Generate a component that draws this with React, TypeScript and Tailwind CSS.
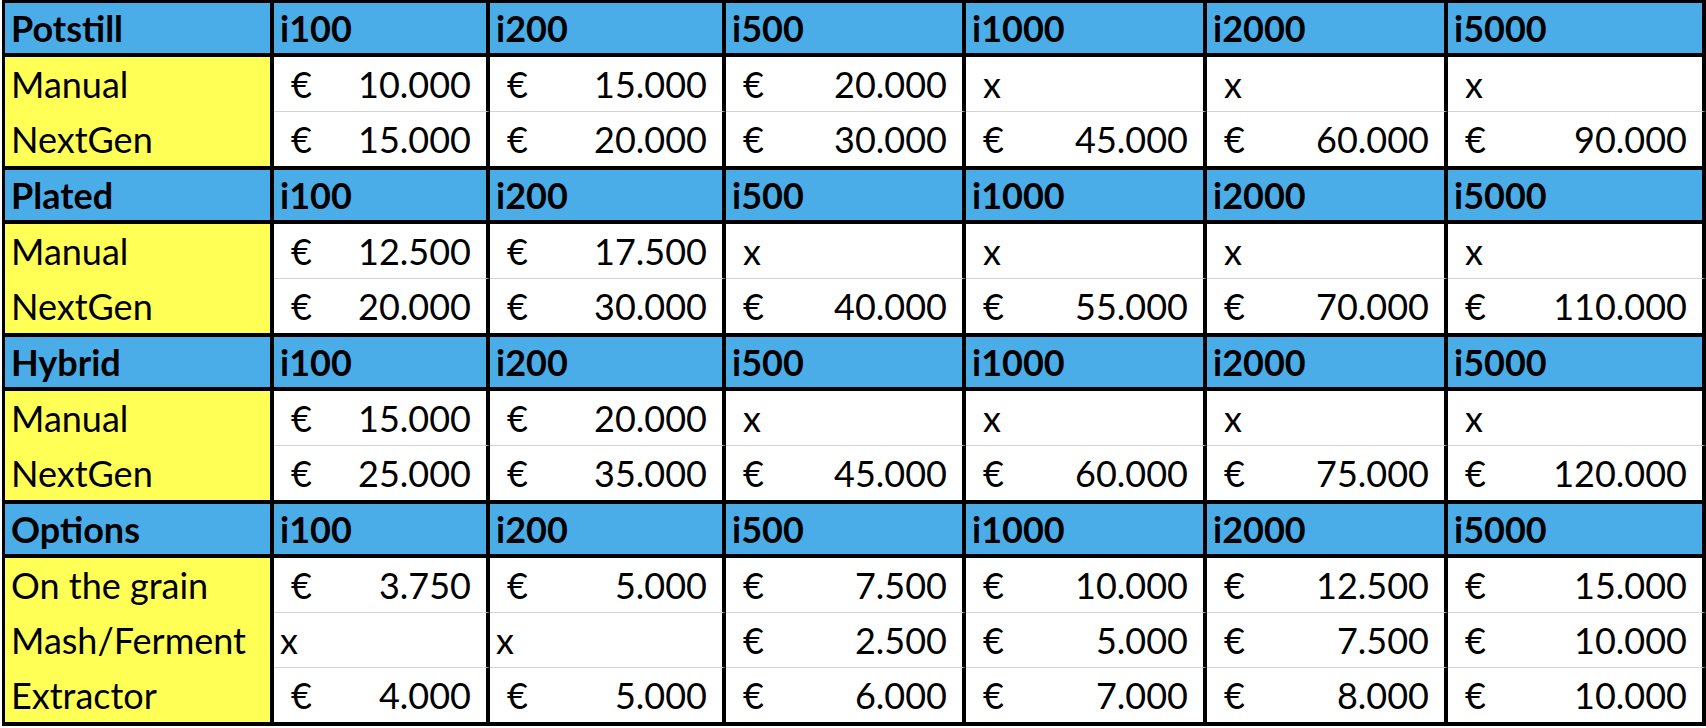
type Cell = string; // "x" = indented x, "xl" = plain x at the left, anything else = euro amount

type Section = {
  title: string;
  rows: { label: string; cells: Cell[] }[];
};

const sizes = ["i100", "i200", "i500", "i1000", "i2000", "i5000"];

// widths of the price columns, right border included (px)
const widths = ["w-[216px]", "w-[236px]", "w-[240px]", "w-[241px]", "w-[241px]", "w-[258px]"];

const sections: Section[] = [
  {
    title: "Potstill",
    rows: [
      { label: "Manual", cells: ["10.000", "15.000", "20.000", "x", "x", "x"] },
      { label: "NextGen", cells: ["15.000", "20.000", "30.000", "45.000", "60.000", "90.000"] },
    ],
  },
  {
    title: "Plated",
    rows: [
      { label: "Manual", cells: ["12.500", "17.500", "x", "x", "x", "x"] },
      { label: "NextGen", cells: ["20.000", "30.000", "40.000", "55.000", "70.000", "110.000"] },
    ],
  },
  {
    title: "Hybrid",
    rows: [
      { label: "Manual", cells: ["15.000", "20.000", "x", "x", "x", "x"] },
      { label: "NextGen", cells: ["25.000", "35.000", "45.000", "60.000", "75.000", "120.000"] },
    ],
  },
  {
    title: "Options",
    rows: [
      { label: "On the grain", cells: ["3.750", "5.000", "7.500", "10.000", "12.500", "15.000"] },
      { label: "Mash/Ferment", cells: ["xl", "xl", "2.500", "5.000", "7.500", "10.000"] },
      { label: "Extractor", cells: ["4.000", "5.000", "6.000", "7.000", "8.000", "10.000"] },
    ],
  },
];

const PriceCell = ({ value, width, last }: { value: Cell; width: string; last: boolean }) => {
  const base = `${width} shrink-0 border-r-4 border-black bg-white ${
    last ? "h-[54px]" : "h-[55px] border-b border-b-[#d4d4d4]"
  } leading-[54px]`;

  if (value === "xl") {
    return <div className={`${base} pl-[6px]`}>x</div>;
  }
  if (value === "x") {
    return <div className={`${base} pl-[17px]`}>x</div>;
  }
  return (
    <div className={`${base} flex justify-between pl-[17px] pr-[15px]`}>
      <span>€</span>
      <span>{value}</span>
    </div>
  );
};

const PriceSection = ({ section }: { section: Section }) => {
  return (
    <div className="border-b-4 border-black">
      {/* Header */}
      <div className="flex h-[54px] border-b-4 border-black bg-[#4bade8] font-bold leading-[50px]">
        <div className="w-[269px] shrink-0 border-r-4 border-black pl-[6px]">{section.title}</div>
        {sizes.map((size, i) => (
          <div key={size} className={`${widths[i]} shrink-0 border-r-4 border-black pl-[6px]`}>
            {size}
          </div>
        ))}
      </div>

      {/* Rows */}
      {section.rows.map((row, r) => {
        const last = r === section.rows.length - 1;
        return (
          <div key={row.label} className="flex">
            <div
              className={`w-[269px] shrink-0 border-r-4 border-black bg-[#ffff55] pl-[6px] leading-[54px] ${
                last ? "h-[54px]" : "h-[55px]"
              }`}
            >
              {row.label}
            </div>
            {row.cells.map((cell, i) => (
              <PriceCell key={i} value={cell} width={widths[i]} last={last} />
            ))}
          </div>
        );
      })}
    </div>
  );
};

export default function App() {
  return (
    <div className="h-[728px] w-[1706px] overflow-hidden bg-white font-['Lato',_'Open_Sans',_sans-serif] text-[36px] text-black">
      <div className="ml-[2px] w-[1704px] border-l-[3px] border-t-[3px] border-black">
        {sections.map((section) => (
          <PriceSection key={section.title} section={section} />
        ))}
      </div>
    </div>
  );
}
